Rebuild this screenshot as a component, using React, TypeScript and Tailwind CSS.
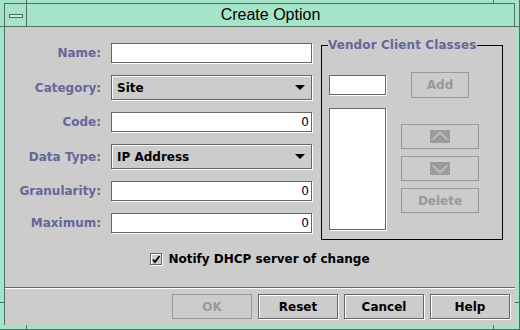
import React from "react";

const lbl = "font-['DejaVu_Sans',sans-serif] font-bold text-[12px] text-[#666699] leading-[14px]";

function TextField({ value, w = "w-[201px]" }: { value?: string; w?: string }) {
  return (
    <div className={`${w} h-[20px] bg-white border border-[#666666] shadow-[1px_1px_0_#ffffff] flex items-center justify-end pr-[2px] font-['DejaVu_Sans',sans-serif] text-[12px] text-black leading-[14px]`}>
      {value}
    </div>
  );
}

function Combo({ value }: { value: string }) {
  return (
    <div className="w-[201px] h-[25px] bg-[#cccccc] border border-[#666666] shadow-[1px_1px_0_#ffffff,inset_1px_1px_0_#ffffff] flex items-center pl-[5px] pr-[6px]">
      <span className="flex-1 font-['DejaVu_Sans',sans-serif] font-bold text-[12px] text-black leading-[14px]">{value}</span>
      <svg width="10" height="6" viewBox="0 0 10 6">
        <polygon points="0,0 10,0 5,5" fill="#000" />
      </svg>
    </div>
  );
}

function Btn({ label, disabled, w = "w-[80px]", h = "h-[25px]", children }: { label?: string; disabled?: boolean; w?: string; h?: string; children?: React.ReactNode }) {
  return (
    <div
      className={`${w} ${h} flex items-center justify-center font-['DejaVu_Sans',sans-serif] font-bold text-[12px] leading-[14px] ${
        disabled
          ? "border border-[#999999] text-[#999999]"
          : "border border-[#666666] text-black shadow-[1px_1px_0_#ffffff,inset_1px_1px_0_#ffffff]"
      }`}
    >
      {children ?? label}
    </div>
  );
}

function Arrow({ up }: { up?: boolean }) {
  return (
    <svg width="20" height="13" viewBox="0 0 20 13">
      <rect x="0" y="0" width="20" height="13" fill="#9c9c9c" />
      {up ? (
        <>
          <polyline points="3,10 10,3 17,10" fill="none" stroke="#b8b8b8" strokeWidth="3" />
          <polyline points="3,12 10,5 17,12" fill="none" stroke="#858585" strokeWidth="1" />
        </>
      ) : (
        <>
          <polyline points="3,3 10,10 17,3" fill="none" stroke="#b8b8b8" strokeWidth="3" />
          <polyline points="3,1 10,8 17,1" fill="none" stroke="#858585" strokeWidth="1" />
        </>
      )}
    </svg>
  );
}

export default function App() {
  const rows: { label: string; el: React.ReactNode }[] = [
    { label: "Name:", el: <TextField /> },
    { label: "Category:", el: <Combo value="Site" /> },
    { label: "Code:", el: <TextField value="0" /> },
    { label: "Data Type:", el: <Combo value="IP Address" /> },
    { label: "Granularity:", el: <TextField value="0" /> },
    { label: "Maximum:", el: <TextField value="0" /> },
  ];
  return (
    <div className="relative w-[520px] h-[330px] bg-[#a5e4c8] overflow-hidden">
      <div className="flex flex-col w-full h-full border-r border-b border-[#52705f] pl-[4px] pt-[3px] pr-[4px] pb-[4px]">
        <div className="flex flex-col flex-1 border-t border-l border-[#52705f]">
          {/* title bar */}
          <div className="flex h-[23px] border-b border-r border-[#52705f]">
            <div className="w-[22px] border-r border-[#52705f] flex items-center justify-center pt-[1px]">
              <div className="w-[14px] h-[4px] border border-[#52705f] bg-[#c6f0dd]" />
            </div>
            <div className="flex-1 flex items-center justify-center font-['Liberation_Sans',sans-serif] text-[16px] text-black leading-[22px]">
              Create Option
            </div>
          </div>
          {/* content */}
          <div className="flex-1 bg-[#cccccc] flex flex-col">
            <div className="flex items-start">
              <div className="mt-[16px] grid grid-cols-[96px_202px] gap-x-[10px] gap-y-[12px] items-center">
                {rows.map((r) => (
                  <React.Fragment key={r.label}>
                    <div className={`${lbl} text-right`}>{r.label}</div>
                    {r.el}
                  </React.Fragment>
                ))}
              </div>
              <div className="mt-[11px] ml-[8px] w-[182px] flex flex-col">
                <div className="flex h-[14px]">
                  <div className="self-end w-[7px] h-[7px] border-t border-l border-black" />
                  <div className={`${lbl} tracking-[0.1px]`}>Vendor Client Classes</div>
                  <div className="self-end flex-1 h-[7px] border-t border-r border-black" />
                </div>
                <div className="h-[188px] border-l border-r border-b border-black flex pl-[7px]">
                  <div className="w-[58px] flex flex-col">
                    <div className="mt-[23px]">
                      <TextField w="w-[57px]" />
                    </div>
                    <div className="mt-[13px] w-[57px] h-[122px] bg-white border border-[#666666] shadow-[1px_1px_0_#ffffff]" />
                  </div>
                  <div className="ml-[14px] w-[78px] flex flex-col items-center">
                    <div className="mt-[20px]">
                      <Btn label="Add" disabled w="w-[58px]" h="h-[26px]" />
                    </div>
                    <div className="mt-[26px]">
                      <Btn disabled w="w-[78px]">
                        <Arrow up />
                      </Btn>
                    </div>
                    <div className="mt-[7px]">
                      <Btn disabled w="w-[78px]">
                        <Arrow />
                      </Btn>
                    </div>
                    <div className="mt-[7px]">
                      <Btn label="Delete" disabled w="w-[78px]" />
                    </div>
                  </div>
                </div>
              </div>
            </div>
            {/* checkbox */}
            <div className="mt-[12px] flex items-center justify-center gap-[6px] h-[14px]">
              <div className="w-[12px] h-[12px] border border-[#666666] bg-[#cccccc] shadow-[1px_1px_0_#ffffff,inset_1px_1px_0_#ffffff] flex items-center justify-center">
                <svg width="10" height="10" viewBox="0 0 10 10">
                  <path d="M2 5.5 L4 8 L8.5 2" fill="none" stroke="#000" strokeWidth="1.8" />
                </svg>
              </div>
              <span className="font-['DejaVu_Sans',sans-serif] font-bold text-[12px] text-black leading-[14px]">
                Notify DHCP server of change
              </span>
            </div>
            {/* separator */}
            <div className="mt-[21px] h-[2px] border-t border-[#666699] border-b border-b-white" />
            {/* buttons */}
            <div className="mt-[5px] flex justify-end gap-[6px] pr-[5px]">
              <Btn label="OK" disabled />
              <Btn label="Reset" />
              <Btn label="Cancel" />
              <Btn label="Help" />
            </div>
          </div>
        </div>
      </div>
      {/* frame notches */}
      <div className="absolute left-[26px] top-0 w-px h-[4px] bg-[#52705f]" />
      <div className="absolute left-[493px] top-0 w-px h-[4px] bg-[#52705f]" />
      <div className="absolute left-[26px] bottom-0 w-px h-[5px] bg-[#52705f]" />
      <div className="absolute left-[493px] bottom-0 w-px h-[5px] bg-[#52705f]" />
      <div className="absolute left-0 top-[26px] w-[4px] h-px bg-[#52705f]" />
      <div className="absolute right-0 top-[26px] w-[5px] h-px bg-[#52705f]" />
      <div className="absolute left-0 top-[302px] w-[4px] h-px bg-[#52705f]" />
      <div className="absolute right-0 top-[302px] w-[5px] h-px bg-[#52705f]" />
    </div>
  );
}
